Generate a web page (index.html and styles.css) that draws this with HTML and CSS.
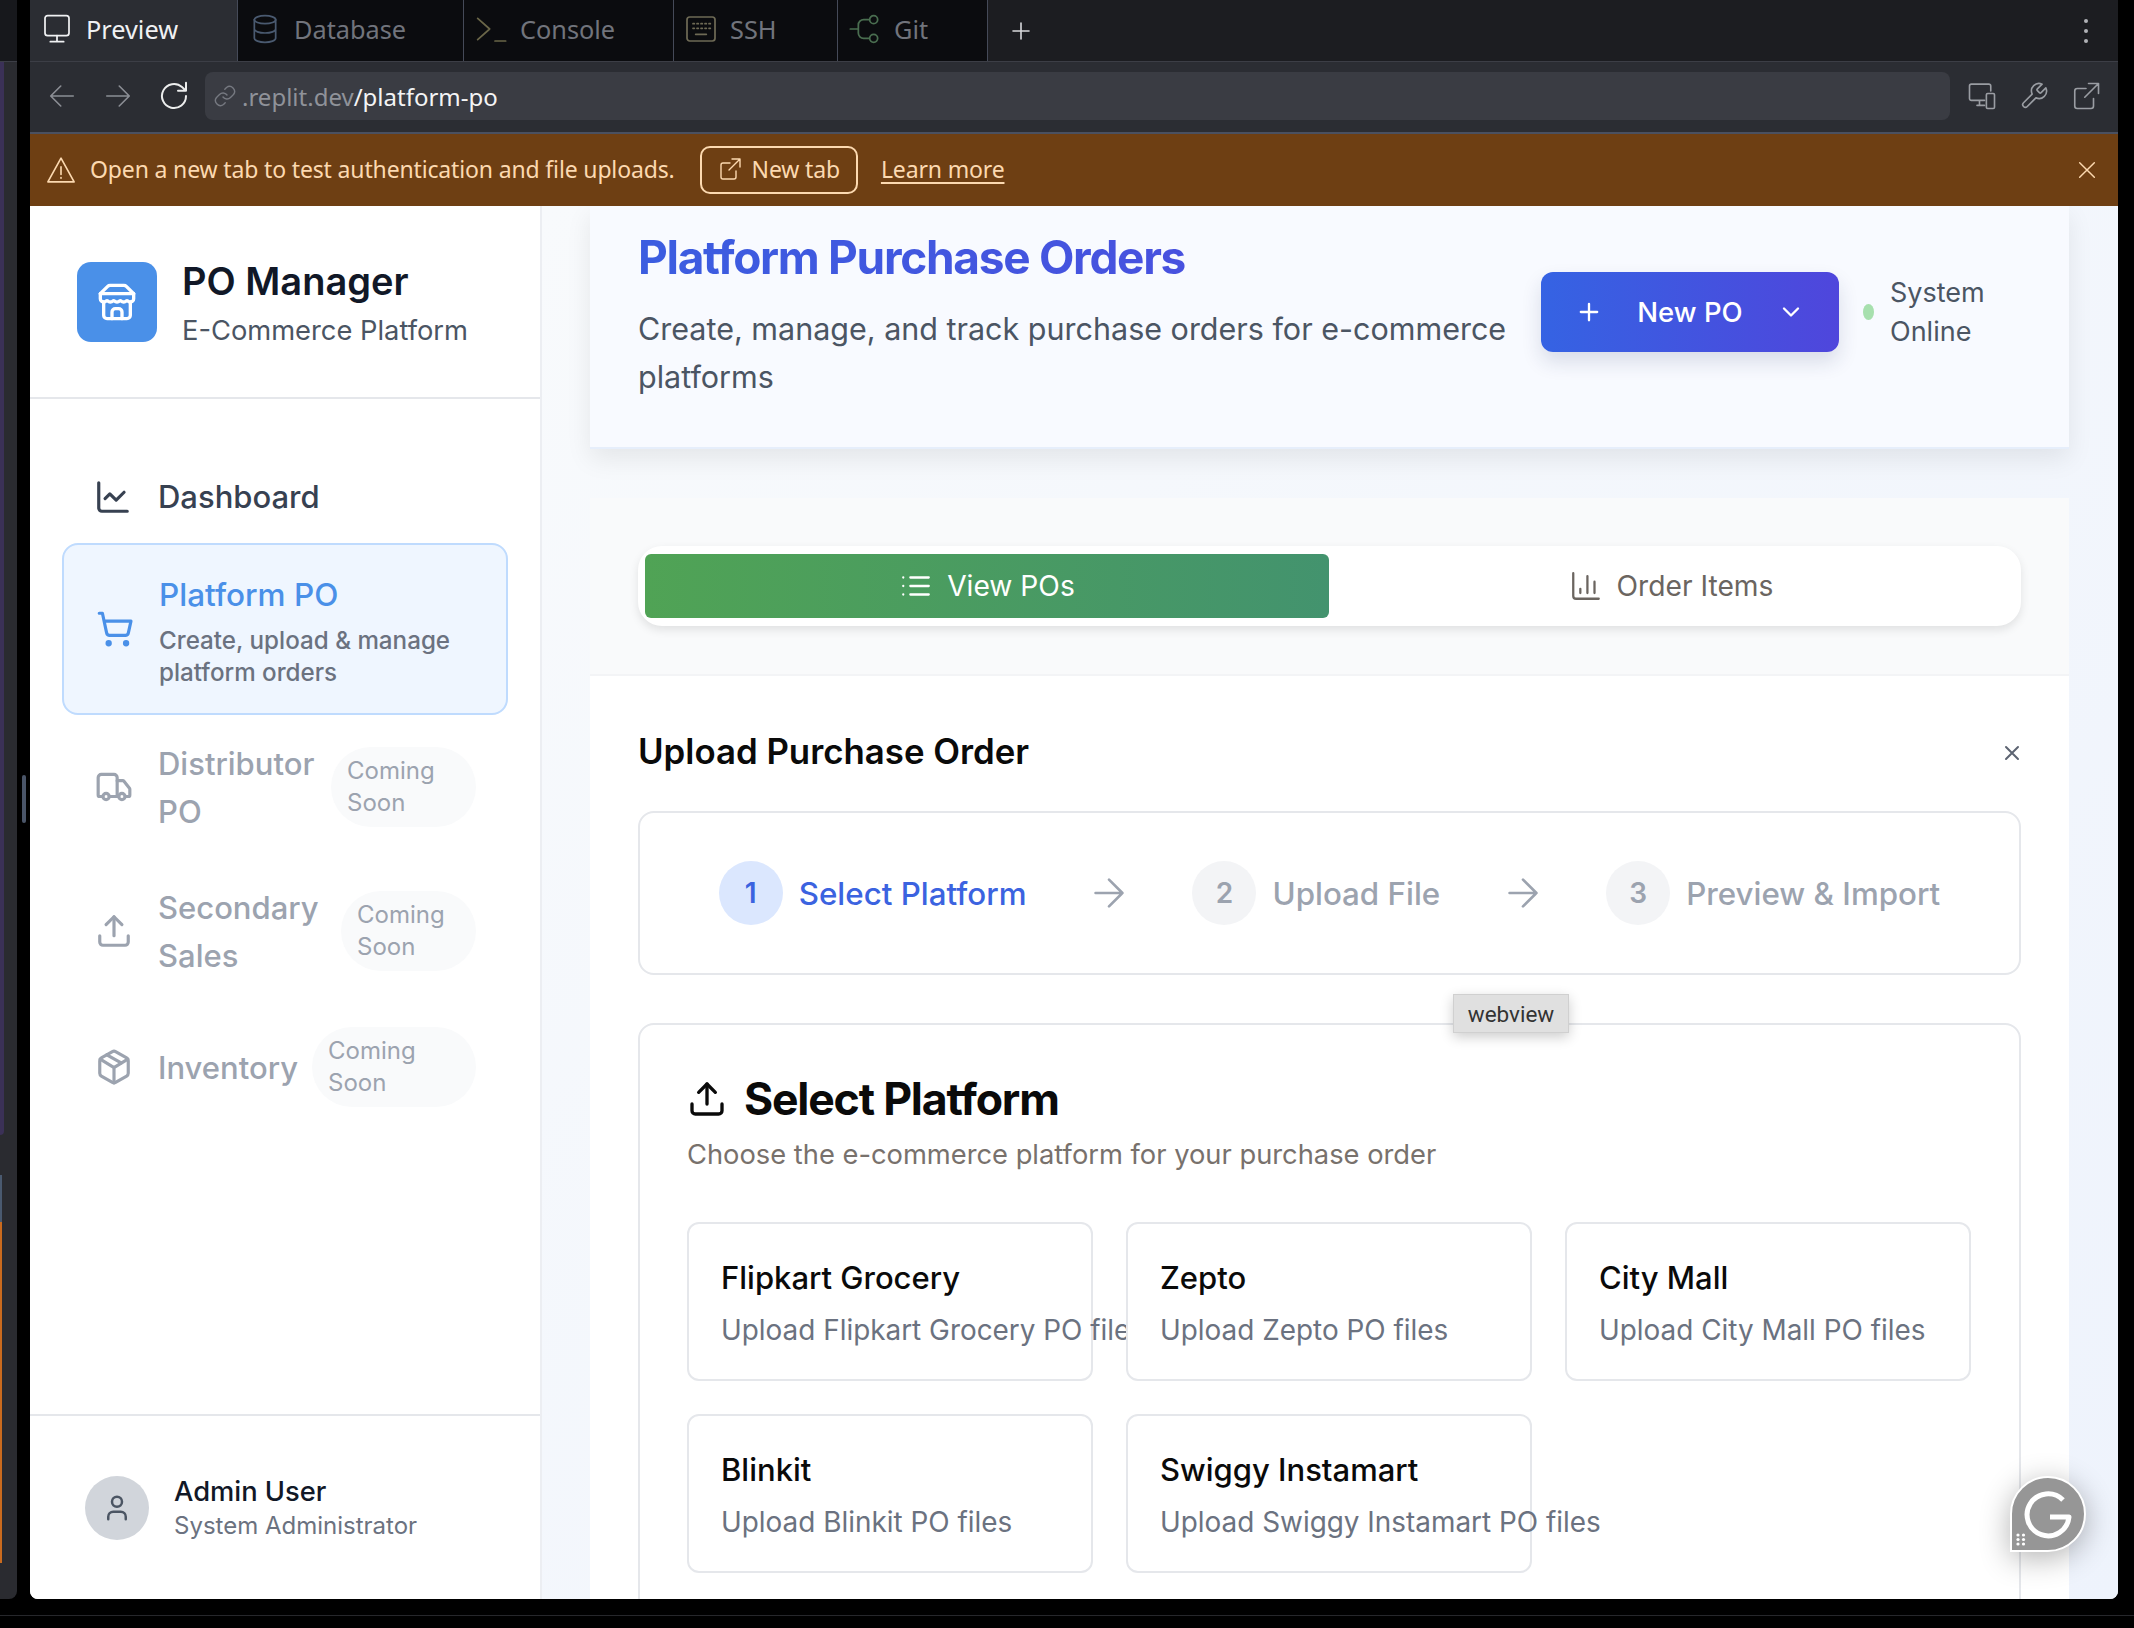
FILE: index.html
```html
<!DOCTYPE html>
<html lang="en">
<head>
  <meta charset="UTF-8" />
  <title>PO Manager - Platform PO</title>
  <link rel="stylesheet" href="styles.css">
</head>
<body>
  <div class="desk">
    <div class="side-strip">
      <div class="strip-top"></div>
      <div class="strip-body">
        <div class="strip-purple"></div>
        <div class="strip-slate"></div>
        <div class="strip-orange"></div>
        <div class="strip-handle"></div>
      </div>
    </div>

    <div class="window">
      <div class="tabbar">
        <div class="tab active">
          <svg class="tab-icon" viewBox="0 0 24 24"><rect x="3" y="2" width="18" height="15" rx="2"/><path d="M12 17v4M7 21.5h10"/></svg>
          <span>Preview</span>
        </div>
        <div class="tab tab-db">
          <svg class="tab-icon db" viewBox="0 0 24 24"><ellipse cx="12" cy="5" rx="8" ry="3"/><path d="M4 5v14c0 1.7 3.6 3 8 3s8-1.3 8-3V5M4 12c0 1.7 3.6 3 8 3s8-1.300 8-3"/></svg>
          <span>Database</span>
        </div>
        <div class="tab tab-console">
          <svg class="tab-icon con" viewBox="0 0 24 24"><path d="M2 4l9 8-9 8M15 21h8"/></svg>
          <span>Console</span>
        </div>
        <div class="tab tab-ssh">
          <svg class="tab-icon ssh" viewBox="0 0 24 24"><rect x="1.500" y="3" width="21" height="18" rx="2"/><path d="M6 8h1M9 8h1M12 8h1M15 8h1M18 8h1M6 11.500h1M9 11.500h1M12 11.500h1M15 11.500h1M18 11.500h1M8 16h8"/></svg>
          <span>SSH</span>
        </div>
        <div class="tab tab-git">
          <svg class="tab-icon git" viewBox="0 0 24 24"><path d="M1 12h6M15 5h-4a4 4 0 0 0-4 4v6a4 4 0 0 0 4 4h4"/><circle cx="18.500" cy="5" r="3"/><circle cx="18.500" cy="19" r="3"/></svg>
          <span>Git</span>
        </div>
        <div class="tab-plus">
          <svg viewBox="0 0 24 24"><path d="M12 4v16M4 12h16"/></svg>
        </div>
        <div class="tab-spacer"></div>
        <div class="tab-dots"><i></i><i></i><i></i></div>
      </div>

      <div class="urlbar">
        <div class="nav-btns">
          <svg class="dim" viewBox="0 0 24 24"><path d="M21 12H4M11 4l-8 8 8 8"/></svg>
          <svg class="dim" viewBox="0 0 24 24"><path d="M3 12h17M13 4l8 8-8 8"/></svg>
          <svg class="bright" viewBox="0 0 24 24"><path d="M21 12a9 9 0 1 1-3-6.700L21 8M21 2v6h-6"/></svg>
        </div>
        <div class="url-input">
          <svg viewBox="0 0 24 24"><path d="M10 13a5 5 0 0 0 7.500.5l3-3a5 5 0 0 0-7-7l-1.700 1.700"/><path d="M14 11a5 5 0 0 0-7.500-.5l-3 3a5 5 0 0 0 7 7l1.700-1.700"/></svg>
          <span class="url-host">.replit.dev</span><span class="url-path">/platform-po</span>
        </div>
        <div class="url-tools">
          <svg viewBox="0 0 24 24"><path d="M19 8V4a1.500 1.500 0 0 0-1.500-1.500h-14A1.500 1.500 0 0 0 2 4v10a1.500 1.500 0 0 0 1.500 1.500H14M8 19.500h6M10 15.500v4"/><rect x="15.500" y="10" width="6.500" height="12" rx="1"/></svg>
          <svg viewBox="0 0 24 24"><path d="M14.700 6.300a1 1 0 0 0 0 1.400l1.600 1.600a1 1 0 0 0 1.400 0l3.770-3.770a6 6 0 0 1-7.940 7.940l-6.910 6.910a2.120 2.120 0 0 1-3-3l6.910-6.910a6 6 0 0 1 7.940-7.940l-3.760 3.760z"/></svg>
          <svg viewBox="0 0 24 24"><path d="M18 14v6a2 2 0 0 1-2 2H5a2 2 0 0 1-2-2V8a2 2 0 0 1 2-2h7M14 2h8v8M22 2L11 13"/></svg>
        </div>
      </div>

      <div class="banner">
        <svg class="warn" viewBox="0 0 24 24"><path d="M12 2.500L1.500 21.500h21z"/><path d="M12 9.500v6M12 18v.5"/></svg>
        <span class="banner-text">Open a new tab to test authentication and file uploads.</span>
        <button class="newtab">
          <svg viewBox="0 0 24 24"><path d="M18 14v6a2 2 0 0 1-2 2H5a2 2 0 0 1-2-2V8a2 2 0 0 1 2-2h7M14 2h8v8M22 2L11 13"/></svg>
          New tab
        </button>
        <a class="learn">Learn more</a>
        <div class="banner-spacer"></div>
        <svg class="banner-x" viewBox="0 0 24 24"><path d="M4 4l16 16M20 4L4 20"/></svg>
      </div>

      <div class="app">
        <aside class="sidebar">
          <div class="brand">
            <div class="brand-logo">
              <svg viewBox="0 0 24 24"><path d="m2 7 4.410-4.410A2 2 0 0 1 7.830 2h8.340a2 2 0 0 1 1.420.59L22 7"/><path d="M4 12v8a2 2 0 0 0 2 2h12a2 2 0 0 0 2-2v-8"/><path d="M15 22v-4a2 2 0 0 0-2-2h-2a2 2 0 0 0-2 2v4"/><path d="M2 7h20"/><path d="M22 7v3a2 2 0 0 1-2 2a2.700 2.700 0 0 1-1.590-.63.7.7 0 0 0-.82 0A2.700 2.700 0 0 1 16 12a2.700 2.700 0 0 1-1.590-.63.7.7 0 0 0-.82 0A2.700 2.700 0 0 1 12 12a2.700 2.700 0 0 1-1.590-.63.7.7 0 0 0-.82 0A2.700 2.700 0 0 1 8 12a2.700 2.700 0 0 1-1.590-.63.7.7 0 0 0-.82 0A2.700 2.700 0 0 1 4 12a2 2 0 0 1-2-2V7"/></svg>
            </div>
            <div class="brand-text">
              <div class="brand-name">PO Manager</div>
              <div class="brand-sub">E-Commerce Platform</div>
            </div>
          </div>

          <nav class="nav">
            <div class="nav-item dash">
              <svg viewBox="0 0 24 24"><path d="M3 3v16a2 2 0 0 0 2 2h16"/><path d="m19 9-5 5-4-4-3 3"/></svg>
              <span>Dashboard</span>
            </div>
            <div class="nav-item current">
              <svg viewBox="0 0 24 24"><circle cx="8" cy="21" r="1"/><circle cx="19" cy="21" r="1"/><path d="M2.050 2.050h2l2.660 12.420a2 2 0 0 0 2 1.580h9.780a2 2 0 0 0 1.950-1.570l1.650-7.430H5.120"/></svg>
              <div class="current-text">
                <div class="current-title">Platform PO</div>
                <div class="current-sub">Create, upload &amp; manage platform orders</div>
              </div>
            </div>
            <div class="nav-item soon soon-dist">
              <svg viewBox="0 0 24 24"><path d="M14 18V6a2 2 0 0 0-2-2H4a2 2 0 0 0-2 2v11a1 1 0 0 0 1 1h2"/><path d="M15 18H9"/><path d="M19 18h2a1 1 0 0 0 1-1v-3.650a1 1 0 0 0-.22-.624l-3.480-4.350A1 1 0 0 0 17.520 8H14"/><circle cx="17" cy="18" r="2"/><circle cx="7" cy="18" r="2"/></svg>
              <span class="soon-label">Distributor PO</span>
              <span class="badge">Coming Soon</span>
            </div>
            <div class="nav-item soon soon-sec">
              <svg viewBox="0 0 24 24"><path d="M21 15v4a2 2 0 0 1-2 2H5a2 2 0 0 1-2-2v-4"/><path d="M17 8l-5-5-5 5"/><path d="M12 3v12"/></svg>
              <span class="soon-label">Secondary Sales</span>
              <span class="badge">Coming Soon</span>
            </div>
            <div class="nav-item soon soon-inv">
              <svg viewBox="0 0 24 24"><path d="M11 21.730a2 2 0 0 0 2 0l7-4A2 2 0 0 0 21 16V8a2 2 0 0 0-1-1.730l-7-4a2 2 0 0 0-2 0l-7 4A2 2 0 0 0 3 8v8a2 2 0 0 0 1 1.730z"/><path d="M12 22V12"/><path d="m3.300 7 7.703 4.734a2 2 0 0 0 1.994 0L20.700 7"/><path d="m7.500 4.270 9 5.150"/></svg>
              <span class="soon-label">Inventory</span>
              <span class="badge">Coming Soon</span>
            </div>
          </nav>

          <div class="side-foot">
            <div class="avatar">
              <svg viewBox="0 0 24 24"><path d="M19 21v-2a4 4 0 0 0-4-4H9a4 4 0 0 0-4 4v2"/><circle cx="12" cy="7" r="4"/></svg>
            </div>
            <div>
              <div class="user-name">Admin User</div>
              <div class="user-role">System Administrator</div>
            </div>
          </div>
        </aside>

        <main class="main">
          <header class="page-head">
            <div class="head-text">
              <h1>Platform Purchase Orders</h1>
              <p>Create, manage, and track purchase orders for e-commerce platforms</p>
            </div>
            <div class="head-actions">
              <button class="new-po">
                <svg viewBox="0 0 24 24"><path d="M5 12h14M12 5v14"/></svg>
                <span>New PO</span>
                <svg viewBox="0 0 24 24"><path d="m6 9 6 6 6-6"/></svg>
              </button>
              <i class="status-dot"></i>
              <span class="status-text">System Online</span>
            </div>
          </header>

          <section class="tabs-wrap">
            <div class="tabs">
              <div class="view-tab on">
                <svg viewBox="0 0 24 24"><path d="M8 6h13M8 12h13M8 18h13M3 6h.01M3 12h.01M3 18h.01"/></svg>
                View POs
              </div>
              <div class="view-tab">
                <svg viewBox="0 0 24 24"><path d="M3 3v16a2 2 0 0 0 2 2h16"/><path d="M18 17V9M13 17V5M8 17v-3"/></svg>
                Order Items
              </div>
            </div>
          </section>

          <section class="panel">
            <div class="panel-head">
              <h2>Upload Purchase Order</h2>
              <svg viewBox="0 0 24 24"><path d="M18 6L6 18M6 6l12 12"/></svg>
            </div>

            <div class="steps">
              <div class="step on"><b>1</b><span>Select Platform</span></div>
              <svg class="step-arrow" viewBox="0 0 24 24"><path d="M5 12h14M12 5l7 7-7 7"/></svg>
              <div class="step"><b>2</b><span>Upload File</span></div>
              <svg class="step-arrow" viewBox="0 0 24 24"><path d="M5 12h14M12 5l7 7-7 7"/></svg>
              <div class="step"><b>3</b><span>Preview &amp; Import</span></div>
            </div>

            <div class="select-card">
              <div class="select-title">
                <svg viewBox="0 0 24 24"><path d="M21 15v4a2 2 0 0 1-2 2H5a2 2 0 0 1-2-2v-4"/><path d="M17 8l-5-5-5 5"/><path d="M12 3v12"/></svg>
                <h3>Select Platform</h3>
              </div>
              <p class="select-sub">Choose the e-commerce platform for your purchase order</p>
              <div class="platforms">
                <div class="platform"><h4>Flipkart Grocery</h4><p>Upload Flipkart Grocery PO files</p></div>
                <div class="platform"><h4>Zepto</h4><p>Upload Zepto PO files</p></div>
                <div class="platform"><h4>City Mall</h4><p>Upload City Mall PO files</p></div>
                <div class="platform"><h4>Blinkit</h4><p>Upload Blinkit PO files</p></div>
                <div class="platform"><h4>Swiggy Instamart</h4><p>Upload Swiggy Instamart PO files</p></div>
              </div>
            </div>
          </section>
        </main>

        <div class="tooltip">webview</div>
        <div class="grammarly">
          <svg viewBox="0 0 72 72"><path class="g-ring" d="M51 22A21 21 0 1 0 57 39H38"/><g class="g-dots"><circle cx="6" cy="57" r="1.600"/><circle cx="11.500" cy="57" r="1.600"/><circle cx="6" cy="61.500" r="1.600"/><circle cx="11.500" cy="61.500" r="1.600"/><circle cx="6" cy="66" r="1.600"/><circle cx="11.500" cy="66" r="1.600"/></g></svg>
        </div>
      </div>
    </div>
  </div>
  <div class="desk-line"></div>
</body>
</html>
```

FILE: styles.css
```css
* {
  box-sizing: border-box;
}
html, body {
  margin: 0;
  height: 100%;
  background: #000;
  overflow: hidden;
}
body {
  font-family: Inter, "Liberation Sans", sans-serif;
}
svg {
  fill: none;
  stroke: currentColor;
  stroke-width: 2;
  stroke-linecap: round;
  stroke-linejoin: round;
  flex: none;
}
h1, h2, h3, h4, p {
  margin: 0;
}

.desk {
  display: flex;
  width: 2134px;
  height: 1599px;
}
.desk-line {
  height: 1px;
  margin-top: 16px;
  background: #26272b;
}

/* neighbouring window edge on the left */
.side-strip {
  width: 17px;
  margin-right: 13px;
  display: flex;
  flex-direction: column;
  background: #2a2b30;
  border-bottom-right-radius: 8px;
}
.strip-top {
  height: 62px;
  background: #17181c;
  border-bottom: 1px solid #3c3e46;
}
.strip-body {
  flex: 1;
  position: relative;
}
.strip-purple {
  position: absolute;
  left: 0;
  top: 0;
  width: 4px;
  height: 1073px;
  border-bottom-right-radius: 4px;
  background: #3b3157;
}
.strip-slate {
  position: absolute;
  left: 0;
  top: 1113px;
  width: 2px;
  height: 47px;
  background: #4a5a70;
}
.strip-orange {
  position: absolute;
  left: 0;
  top: 1160px;
  width: 2px;
  height: 341px;
  background: #c96a1e;
}
.strip-handle {
  position: absolute;
  left: 22px;
  top: 713px;
  width: 4px;
  height: 48px;
  border-radius: 2px;
  background: #4a5568;
}

.window {
  width: 2088px;
  display: flex;
  flex-direction: column;
  overflow: hidden;
  border-radius: 0 0 8px 8px;
  background: #fff;
}

/* replit chrome */
.tabbar {
  height: 62px;
  flex: none;
  display: flex;
  background: #1c1d21;
  border-bottom: 1px solid #3c3e46;
  font-family: "Noto Sans", sans-serif;
  font-size: 25.300px;
}
.tab {
  display: flex;
  align-items: center;
  gap: 13px;
  padding: 0 0 4px 11px;
  background: #0b0c0f;
  color: #71747c;
  border-right: 1px solid #454a58;
}
.tab.active {
  width: 208px;
  background: #2b2d33;
  color: #f0f1f3;
}
.tab-db { width: 226px; }
.tab-console { width: 210px; }
.tab-ssh { width: 164px; }
.tab-git { width: 150px; }
.tab-icon {
  width: 32px;
  height: 32px;
  stroke-width: 1.300;
}
.tab-icon.db { color: #4a5a70; }
.tab-icon.con { color: #6a6648; }
.tab-icon.ssh { color: #6e6a55; }
.tab-icon.git { color: #4a6e50; }
.tab-plus {
  width: 65px;
  display: flex;
  align-items: center;
  justify-content: center;
  color: #d8d9dc;
}
.tab-plus svg {
  width: 24px;
  height: 24px;
  stroke-width: 1.600;
}
.tab-spacer {
  flex: 1;
}
.tab-dots {
  width: 64px;
  display: flex;
  flex-direction: column;
  align-items: center;
  justify-content: center;
  gap: 6px;
}
.tab-dots i {
  width: 4px;
  height: 4px;
  border-radius: 50%;
  background: #b0b2b6;
}

.urlbar {
  height: 72px;
  flex: none;
  display: flex;
  align-items: center;
  background: #2b2d33;
  border-bottom: 2px solid #4a5060;
  padding-bottom: 2px;
}
.nav-btns {
  width: 175px;
  flex: none;
  display: flex;
  align-items: center;
  gap: 26px;
  padding-left: 17px;
}
.nav-btns svg {
  width: 30px;
  height: 30px;
  stroke-width: 1.300;
}
.nav-btns .dim { color: #8b8e95; }
.nav-btns .bright {
  width: 32px;
  height: 32px;
  margin-left: -1px;
  color: #eceded;
  stroke-width: 1.500;
}
.url-input {
  width: 1745px;
  height: 48px;
  display: flex;
  align-items: center;
  padding-left: 8px;
  border-radius: 8px;
  background: #3a3c43;
  font-family: "Noto Sans", sans-serif;
  font-size: 24px;
}
.url-input svg {
  width: 24px;
  height: 24px;
  margin-right: 5px;
  color: #767981;
  stroke-width: 1.400;
}
.url-host { color: #8f9299; }
.url-path { color: #f4f4f5; }
.url-tools {
  display: flex;
  align-items: center;
  gap: 22px;
  padding-left: 17px;
  color: #9a9da3;
}
.url-tools svg {
  width: 30px;
  height: 30px;
  stroke-width: 1.300;
}

.banner {
  height: 72px;
  flex: none;
  display: flex;
  align-items: center;
  padding: 0 20px 0 16px;
  background: #6e3f13;
  color: #fcd9b0;
  font-family: "Noto Sans", sans-serif;
  font-size: 23px;
  letter-spacing: -.15px;
}
.warn {
  width: 30px;
  height: 30px;
  stroke-width: 1.300;
}
.banner-text {
  margin-left: 14px;
  padding-bottom: 3px;
}
.newtab {
  display: flex;
  align-items: center;
  gap: 10px;
  height: 48px;
  margin-left: 25px;
  padding: 0 16px 3px;
  background: none;
  border: 2px solid #fcd9b0;
  border-radius: 10px;
  color: inherit;
  font: inherit;
  letter-spacing: inherit;
}
.newtab svg {
  width: 24px;
  height: 24px;
  stroke-width: 1.400;
}
.learn {
  margin-left: 23px;
  padding-bottom: 3px;
  text-decoration: underline;
  text-underline-offset: 4px;
}
.banner-spacer {
  flex: 1;
}
.banner-x {
  width: 22px;
  height: 22px;
  stroke-width: 1.600;
}

/* app */
.app {
  flex: 1;
  min-height: 0;
  display: flex;
  position: relative;
}
.sidebar {
  width: 512px;
  flex: none;
  display: flex;
  flex-direction: column;
  background: #fff;
  border-right: 2px solid #eceef2;
}
.brand {
  height: 193px;
  flex: none;
  display: flex;
  align-items: center;
  gap: 25px;
  padding: 0 0 0 47px;
  border-bottom: 2px solid #e5e7eb;
}
.brand-logo {
  width: 80px;
  height: 80px;
  display: flex;
  align-items: center;
  justify-content: center;
  border-radius: 14px;
  background: #4a90e8;
  color: #fff;
}
.brand-logo svg {
  width: 40px;
  height: 40px;
}
.brand-text {
  padding-top: 3px;
}
.brand-name {
  font-size: 38px;
  font-weight: 600;
  line-height: 48px;
  color: #111827;
}
.brand-sub {
  margin-top: 8px;
  font-size: 27.300px;
  line-height: 36px;
  color: #4b5563;
}

.nav {
  flex: 1;
  display: flex;
  flex-direction: column;
  padding: 51px 32px 0;
}
.nav-item {
  display: flex;
  align-items: center;
  font-size: 31px;
  font-weight: 500;
}
.nav-item > svg {
  width: 38px;
  height: 38px;
}
.dash {
  height: 93px;
  padding-left: 32px;
  gap: 26px;
  color: #374151;
}
.current {
  height: 172px;
  padding-left: 32px;
  gap: 25px;
  background: #eff6ff;
  border: 2px solid #bfdbfe;
  border-radius: 16px;
  color: #4a90e8;
  margin-bottom: 32px;
}
.current-text {
  padding-top: 2px;
}
.current-title {
  font-size: 31.500px;
  line-height: 48px;
}
.current-sub {
  margin-top: 6px;
  font-size: 24.200px;
  line-height: 32px;
  color: #6b7280;
}
.soon {
  padding: 0 32px 0 33px;
  color: #9ca3af;
  margin-bottom: 60px;
}
.soon-dist { height: 80px; margin-bottom: 64px; }
.soon-sec { height: 80px; margin-bottom: 56px; }
.soon-inv { height: 80px; }
.soon-label {
  line-height: 48px;
  margin-left: 25px;
  padding-top: 2px;
}
.soon-dist .soon-label, .soon-sec .soon-label {
  width: 150px;
}
.badge {
  margin-left: auto;
  padding: 0 16px;
  border-radius: 40px;
  background: #f9fafb;
  font-size: 24px;
  font-weight: 400;
  line-height: 32px;
  height: 80px;
  display: flex;
  align-items: center;
}
.soon-dist .badge { width: 145px; }
.soon-sec .badge { width: 135px; }
.soon-inv .badge { width: 164px; }

.side-foot {
  height: 185px;
  flex: none;
  display: flex;
  align-items: center;
  gap: 25px;
  padding: 0 0 0 55px;
  border-top: 2px solid #e5e7eb;
}
.avatar {
  width: 64px;
  height: 64px;
  display: flex;
  align-items: center;
  justify-content: center;
  border-radius: 50%;
  background: #d1d5db;
  color: #4b5563;
}
.avatar svg {
  width: 30px;
  height: 30px;
}
.user-name {
  font-size: 27.300px;
  font-weight: 500;
  line-height: 36px;
  color: #111827;
}
.user-role {
  font-size: 24px;
  line-height: 32px;
  color: #6b7280;
}

.main {
  flex: 1;
  min-width: 0;
  padding: 0 49px 0 48px;
  background: linear-gradient(135deg, #f8fafc, #eef3fc);
  overflow: hidden;
}
.page-head {
  height: 243px;
  display: flex;
  align-items: center;
  gap: 26px;
  padding: 0 48px 18px;
  background: #f8faff;
  border-bottom: 2px solid #e6eefb;
  box-shadow: 0 10px 24px rgba(0, 0, 0, .08);
}
.head-text {
  flex: 1;
  min-width: 0;
  margin-bottom: 4px;
}
h1 {
  font-size: 46px;
  font-weight: 700;
  letter-spacing: -1.300px;
  line-height: 52px;
  background: linear-gradient(90deg, #3b5de0, #4f4ade);
  -webkit-background-clip: text;
  background-clip: text;
  color: transparent;
}
.head-text p {
  margin-top: 22px;
  font-size: 30.500px;
  line-height: 48px;
  color: #4b5563;
}
.head-actions {
  display: flex;
  align-items: center;
  margin-bottom: 12px;
}
.new-po {
  width: 298px;
  height: 80px;
  display: flex;
  align-items: center;
  justify-content: space-between;
  padding: 0 34px;
  border: none;
  border-radius: 12px;
  background: linear-gradient(90deg, #3563e3, #4f46dc);
  box-shadow: 0 10px 20px rgba(30, 40, 90, .14);
  color: #fff;
  font: 500 27.500px Inter, sans-serif;
}
.new-po svg {
  width: 28px;
  height: 28px;
}
.status-dot {
  width: 11px;
  height: 16px;
  margin: 0 16px 0 24px;
  border-radius: 50%;
  background: #a7e0ae;
}
.status-text {
  width: 131px;
  font-size: 27px;
  line-height: 39px;
  color: #4b5563;
}

.tabs-wrap {
  margin-top: 49px;
  padding: 48px;
  background: #f9fafb;
  border-bottom: 2px solid #f3f4f6;
}
.tabs {
  height: 80px;
  display: grid;
  grid-template-columns: 684px 1fr;
  align-items: center;
  padding: 0 8px 0 7px;
  background: #fff;
  border-radius: 24px;
  box-shadow: 0 4px 10px rgba(0, 0, 0, .1);
}
.view-tab {
  height: 64px;
  display: flex;
  align-items: center;
  justify-content: center;
  gap: 14px;
  font-size: 28.200px;
  color: #6b6560;
}
.view-tab svg {
  width: 34px;
  height: 34px;
  stroke-width: 1.600;
}
.view-tab.on {
  border-radius: 6px;
  background: linear-gradient(90deg, #50a355, #43936e);
  color: #fff;
}

.panel {
  padding: 48px;
  background: #fff;
}
.panel-head {
  height: 54px;
  display: flex;
  align-items: center;
  justify-content: space-between;
  margin-bottom: 33px;
}
h2 {
  font-size: 34.800px;
  font-weight: 600;
  color: #0a0a0a;
}
.panel-head svg {
  width: 24px;
  height: 24px;
  margin: 4px -3px 0 0;
  color: #5d6472;
}
.steps {
  height: 164px;
  display: flex;
  align-items: center;
  justify-content: center;
  gap: 60px;
  border: 2px solid #e5e7eb;
  border-radius: 16px;
}
.step {
  display: flex;
  align-items: center;
  gap: 16px;
  font-size: 31.300px;
  font-weight: 500;
  color: #9ca3af;
}
.step span {
  padding-top: 2px;
}
.step b {
  width: 64px;
  height: 64px;
  display: flex;
  align-items: center;
  justify-content: center;
  border-radius: 50%;
  background: #f3f4f6;
  font-size: 28px;
  font-weight: 600;
}
.step.on {
  color: #3b63e0;
}
.step.on b {
  background: #dbe7fe;
}
.step-arrow {
  width: 46px;
  height: 46px;
  color: #9ca3af;
  stroke-width: 1.400;
}

.select-card {
  margin-top: 48px;
  padding: 48px 48px 48px 47px;
  border: 2px solid #e5e7eb;
  border-radius: 16px;
  height: 700px;
}
.select-title {
  display: flex;
  align-items: center;
  gap: 17px;
}
.select-title svg {
  width: 40px;
  height: 40px;
  color: #0a0a0a;
}
h3 {
  font-size: 44.600px;
  font-weight: 700;
  letter-spacing: -1.200px;
  line-height: 52px;
  color: #0a0a0a;
}
.select-sub {
  margin-top: 10px;
  font-size: 27.300px;
  line-height: 40px;
  color: #78716c;
}
.platforms {
  margin-top: 47px;
  display: grid;
  grid-template-columns: repeat(3, 406px);
  grid-auto-rows: 159px;
  gap: 33px;
}
.platform {
  padding: 34px 32px;
  background: #fff;
  border: 2px solid #e5e7eb;
  border-radius: 12px;
  white-space: nowrap;
}
h4 {
  font-size: 31px;
  font-weight: 500;
  line-height: 40px;
  color: #0a0a0a;
}
.platform p {
  margin-top: 12px;
  font-size: 27.900px;
  line-height: 40px;
  color: #6b7280;
}

.tooltip {
  position: absolute;
  left: 1423px;
  top: 788px;
  width: 116px;
  height: 39px;
  display: flex;
  align-items: center;
  justify-content: center;
  background: #e0e0e0;
  border: 1px solid #d0d0d0;
  box-shadow: 0 4px 12px rgba(0, 0, 0, .2);
  color: #333;
  font: 22.500px Roboto, sans-serif;
}
.grammarly {
  position: absolute;
  left: 1980px;
  top: 1270px;
  width: 76px;
  height: 76px;
  border: 2px solid #fff;
  border-radius: 50% 50% 50% 0;
  background: #969696;
  box-shadow: 0 6px 30px rgba(0, 0, 0, .3);
}
.grammarly svg {
  display: block;
  width: 72px;
  height: 72px;
}
.g-ring {
  stroke: #fff;
  stroke-width: 5;
  stroke-linecap: butt;
}
.g-dots circle {
  fill: #fff;
  stroke: none;
}
```
